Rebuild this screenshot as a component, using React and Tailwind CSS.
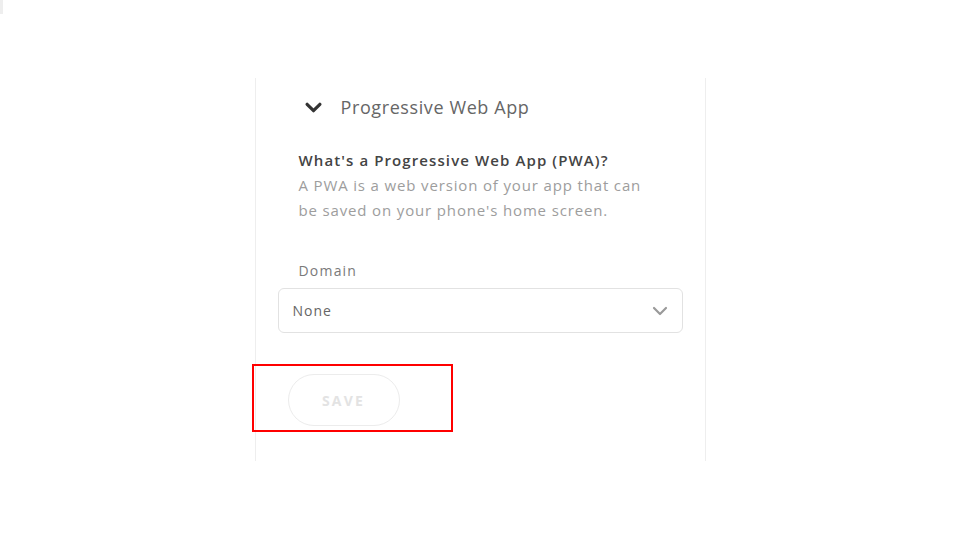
import React from "react";

const Chevron = ({ className, stroke = 3 }) => (
    <svg viewBox="0 0 16 10" className={className} fill="none" stroke="currentColor" strokeWidth={stroke} strokeLinecap="round" strokeLinejoin="round">
        <path d="M2 2l6 6 6-6" />
    </svg>
);

const App = () => {
    return (
        <div className="relative w-[960px] h-[540px] overflow-hidden bg-white pt-[78px]" style={{ fontFamily: '"Open Sans", sans-serif' }}>
            <div className="absolute left-0 top-0 w-[3px] h-[14px] bg-[#eeeeee]" />
            <div className="mx-auto w-[451px] h-[383px] border-x border-[#eeeeee]">
                {/* section header */}
                <div className="flex items-center pt-[15px] pl-[49px] h-[43px]">
                    <Chevron className="w-[17px] h-[11px] text-[#333333]" />
                    <span className="ml-[19px] text-[18px] leading-[28px] tracking-[0.6px] text-[#666666]">Progressive Web App</span>
                </div>

                <div className="pl-[43px] pt-[27px]">
                    <div className="text-[15px] leading-[25px] font-semibold tracking-[1.1px] text-[#444444]">What's a Progressive Web App (PWA)?</div>
                    <div className="text-[15px] leading-[25px] tracking-[0.85px] text-[#9d9d9d] w-[360px]">
                        A PWA is a web version of your app that can be saved on your phone's home screen.
                    </div>
                    <div className="mt-[38px] text-[14px] leading-[20px] tracking-[1.2px] text-[#7a7a7a]">Domain</div>
                </div>

                <div className="ml-[22px] mt-[7px] w-[405px] h-[45px] rounded-[6px] border border-[#e2e2e2] flex items-center justify-between pl-[14px] pr-[14px]">
                    <span className="text-[14px] tracking-[1px] text-[#666666]">None</span>
                    <Chevron className="w-[16px] h-[10px] text-[#9a9a9a]" stroke={2.2} />
                </div>

                <div className="ml-[-4px] mt-[31px] w-[201px] h-[68px] border-2 border-[#ff0000] pl-[34px] pt-[8px]">
                    <button className="w-[112px] h-[52px] rounded-full border border-[#ececec] text-[14px] font-bold tracking-[2.2px] text-[#e3e3e3]">
                        SAVE
                    </button>
                </div>
            </div>
        </div>
    );
};

export default App;
